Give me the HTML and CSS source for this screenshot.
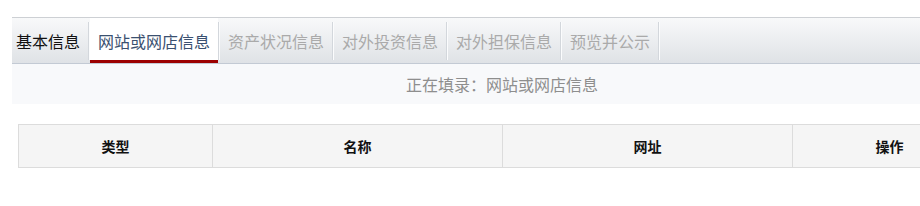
FILE: index.html
```html
<!DOCTYPE html>
<html lang="zh-CN">
<head>
    <meta charset="UTF-8">
    <title>网站或网店信息</title>
    <link rel="stylesheet" href="styles.css">
</head>
<body>
    <div class="wrap">
        <div class="tabs">
            <a class="tab first done">基本信息</a>
            <i class="sep"></i>
            <a class="tab active">网站或网店信息</a>
            <i class="sep"></i>
            <a class="tab">资产状况信息</a>
            <i class="sep"></i>
            <a class="tab">对外投资信息</a>
            <i class="sep"></i>
            <a class="tab">对外担保信息</a>
            <i class="sep"></i>
            <a class="tab">预览并公示</a>
            <i class="sep"></i>
        </div>
        <div class="current">正在填录：网站或网店信息</div>
        <table class="grid">
            <thead>
                <tr>
                    <th class="narrow">类型</th>
                    <th class="wide">名称</th>
                    <th class="wide">网址</th>
                    <th class="narrow">操作</th>
                </tr>
            </thead>
        </table>
    </div>
</body>
</html>
```

FILE: styles.css
```css
html, body {
    margin: 0;
    overflow: hidden;
    background: #fff;
}
body {
    font-family: "Microsoft YaHei", "Noto Sans CJK SC", sans-serif;
}
.wrap {
    width: 980px;
    margin-left: 12px;
    padding-top: 17px;
}
.tabs {
    display: flex;
    align-items: center;
    height: 45px;
    border-top: 1px solid #cdd0d4;
    border-bottom: 1px solid #c3cad4;
    background: linear-gradient(to bottom, #f8f9fa, #dfe2e6);
}
.tab {
    display: flex;
    align-items: center;
    height: 45px;
    padding: 0 8px;
    font-size: 16px;
    color: #aaa;
    cursor: pointer;
}
.tab.first {
    padding-left: 4px;
}
.tab.done {
    color: #111;
}
.tab.active {
    background: #fff;
    color: #3a5070;
    box-shadow: inset 0 -3px 0 #9c0000;
}
.sep {
    width: 1px;
    height: 38px;
    background: #d3d7dc;
    border-right: 1px solid #fbfcfd;
}
.current {
    height: 40px;
    line-height: 41px;
    background: #f8f9fb;
    text-align: center;
    font-size: 16px;
    color: #8e8e8e;
}
.grid {
    table-layout: fixed;
    width: 968px;
    margin: 20px 6px 0;
    border-collapse: collapse;
}
.grid th {
    height: 42px;
    padding: 0;
    background: #f5f5f5;
    border: 1px solid #dcdcdc;
    font-size: 14px;
    font-weight: bold;
    color: #111;
    text-align: center;
}
.narrow {
    width: 193px;
}
.wide {
    width: 289px;
}
```
